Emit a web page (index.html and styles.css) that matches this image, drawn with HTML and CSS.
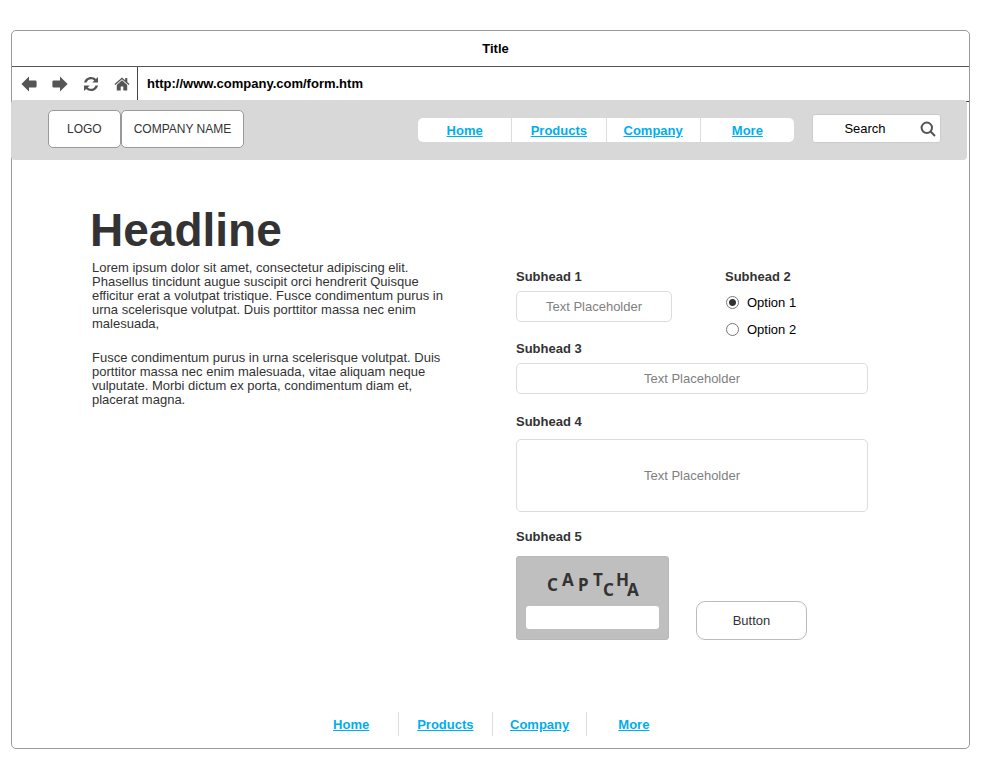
FILE: index.html
```html
<!DOCTYPE html>
<html lang="en">
<head>
<meta charset="utf-8">
<title>Title</title>
<link rel="stylesheet" href="styles.css">
</head>
<body>
<div class="window">
  <div class="title-bar">Title</div>
  <div class="address-bar">
    <div class="tools">
      <button class="tool" type="button" aria-label="Back"><svg viewBox="0 0 16 16"><path d="M.4 8 8 .6V4.600h6.400a1.200 1.200 0 0 1 1.200 1.200v4.400a1.200 1.200 0 0 1-1.200 1.200H8v4z"/></svg></button>
      <button class="tool" type="button" aria-label="Forward"><svg viewBox="0 0 16 16"><path d="M15.600 8 8 .6V4.600H1.600A1.200 1.200 0 0 0 .4 5.800v4.400A1.200 1.200 0 0 0 1.600 11.400H8v4z"/></svg></button>
      <button class="tool" type="button" aria-label="Reload"><svg viewBox="0 0 16 16"><path d="M1 6.600C1.800 3.200 4.600 1 8 1c1.900 0 3.600.7 4.900 1.900L15 1v5.600H9.300L11.300 4.600C10.400 3.700 9.300 3.200 8 3.200c-2 0-3.700 1.200-4.500 3.400zM15 9.400C14.200 12.800 11.400 15 8 15c-1.900 0-3.600-.7-4.900-1.900L1 15V9.400h5.700l-2 2c.9.9 2 1.400 3.300 1.400 2 0 3.700-1.200 4.500-3.400z"/></svg></button>
      <button class="tool" type="button" aria-label="Home page"><svg viewBox="0 0 16 16"><path d="M8 1.400.5 8l.9 1L8 3.200 14.600 9l.9-1-2.200-2V2h-2.100v2.200z"/><path d="M8 4.300 2.800 8.900V14.500h3.900v-4h2.600v4h3.900V8.900z"/></svg></button>
    </div>
    <div class="address">http://www.company.com/form.htm</div>
  </div>

  <header class="site-header">
    <div class="brand">
      <div class="brand-box logo">LOGO</div>
      <div class="brand-box name">COMPANY NAME</div>
    </div>
    <nav class="menu menu-top" aria-label="Main">
      <a href="#home">Home</a>
      <a href="#products">Products</a>
      <a href="#company">Company</a>
      <a href="#more">More</a>
    </nav>
    <form class="search">
      <input type="search" aria-label="Search" placeholder="Search">
      <button class="search-button" type="button" aria-label="Run search"><svg viewBox="0 0 16 16"><circle cx="6.800" cy="6.800" r="5.200"/><path d="m10.800 10.800 4.200 4.200"/></svg></button>
    </form>
  </header>

  <main class="content">
    <article class="story">
      <h1>Headline</h1>
      <p>Lorem ipsum dolor sit amet, consectetur adipiscing elit. Phasellus tincidunt augue suscipit orci hendrerit Quisque efficitur erat a volutpat tristique. Fusce condimentum purus in urna scelerisque volutpat. Duis porttitor massa nec enim malesuada,</p>
      <p>Fusce condimentum purus in urna scelerisque volutpat. Duis porttitor massa nec enim malesuada, vitae aliquam neque vulputate. Morbi dictum ex porta, condimentum diam et, placerat magna.</p>
    </article>

    <form class="form">
      <div class="row">
        <div class="field">
          <label class="subhead" for="field-1">Subhead 1</label>
          <input class="box" id="field-1" type="text" placeholder="Text Placeholder">
        </div>
        <fieldset class="options">
          <legend class="subhead">Subhead 2</legend>
          <label class="option"><input type="radio" name="option" checked>Option 1</label>
          <label class="option"><input type="radio" name="option">Option 2</label>
        </fieldset>
      </div>
      <div class="field">
        <label class="subhead" for="field-3">Subhead 3</label>
        <input class="box" id="field-3" type="text" placeholder="Text Placeholder">
      </div>
      <div class="field">
        <label class="subhead" for="field-4">Subhead 4</label>
        <textarea class="box area" id="field-4" placeholder="Text Placeholder"></textarea>
      </div>
      <div class="field">
        <label class="subhead" for="field-5">Subhead 5</label>
        <div class="submit-row">
          <div class="captcha">
            <svg class="captcha-art" viewBox="0 0 112 32" role="img" aria-label="Captcha"><text x="10 25 41 56 66 79 90" y="23 18 23 18 28 18 28">CAPTCHA</text></svg>
            <input id="field-5" type="text">
          </div>
          <button class="submit" type="button">Button</button>
        </div>
      </div>
    </form>
  </main>

  <footer class="site-footer">
    <nav class="menu" aria-label="Footer">
      <a href="#home">Home</a>
      <a href="#products">Products</a>
      <a href="#company">Company</a>
      <a href="#more">More</a>
    </nav>
  </footer>
</div>
</body>
</html>
```
FILE: styles.css
```css
* {
  box-sizing: border-box;
}

body {
  margin: 30px 30px 11px 11px;
  background: #fff;
  color: #333;
  font: 13px/15px "Liberation Sans", Arial, sans-serif;
}

input,
textarea,
button {
  font: inherit;
  color: inherit;
}

button {
  padding: 0;
  border: 0;
  background: none;
}

.window {
  border: 1px solid #999;
  border-radius: 5px;
}

.title-bar {
  padding: 10px 0 10px 10px;
  border-bottom: 1px solid #555;
  color: #000;
  font-weight: bold;
  text-align: center;
}

.address-bar {
  display: flex;
  height: 35px;
  border-bottom: 1px solid #333;
  color: #000;
  font-weight: bold;
}

.tools {
  display: flex;
  align-items: center;
  gap: 15px;
  padding: 0 7px 0 9px;
  border-right: 1px solid #444;
}

.tool {
  width: 16px;
  height: 16px;
}

.tool svg {
  display: block;
  fill: #555;
}

.address {
  padding: 9px;
}

.site-header {
  position: relative;
  display: flex;
  align-items: flex-start;
  margin: -2px 2px 0 -1px;
  padding: 10px 26px 12px 37px;
  border-radius: 4px;
  background: #d8d8d8;
}

.brand {
  display: flex;
  margin-right: auto;
}

.brand-box {
  padding: 11px 12px 10px;
  border: 1px solid #999;
  border-radius: 5px;
  background: #fff;
  font-size: 12px;
}

.logo {
  padding: 11px 18px 10px;
}

.menu {
  display: flex;
  width: 376px;
}

.menu a {
  flex: 1;
  padding: 5px 0 4px;
  border-left: 1px solid #ddd;
  color: #00aeef;
  font-weight: bold;
  text-align: center;
}

.menu a:first-child {
  border-left: 0;
}

.menu-top {
  margin: 8px 18px 0 0;
  border-radius: 5px;
  background: #fff;
}

.search {
  display: flex;
  align-items: center;
  width: 129px;
  height: 29px;
  margin-top: 4px;
  padding: 0 4px 0 10px;
  border: 1px solid #ccc;
  border-radius: 3px;
  background: #fff;
}

.search input {
  flex: 1;
  min-width: 0;
  padding: 0;
  border: 0;
  background: none;
  text-align: center;
}

.search input::placeholder {
  color: #000;
  opacity: 1;
}

.search-button {
  width: 16px;
  height: 16px;
}

.search-button svg {
  display: block;
  fill: none;
  stroke: #555;
  stroke-width: 2;
}

.content {
  display: grid;
  grid-template-columns: minmax(0, 352px) minmax(0, 352px);
  justify-content: space-between;
  padding: 46px 101px 0 80px;
}

.story h1 {
  margin: 0 0 7px -2px;
  font-size: 46px;
  line-height: 48px;
}

.story p {
  margin: 0 0 20px;
  line-height: 14px;
}

.form {
  padding-top: 63px;
}

.row {
  display: flex;
  justify-content: space-between;
  margin-bottom: 4px;
}

.field {
  display: flex;
  flex-direction: column;
  margin-bottom: 20px;
}

.row .field {
  width: 156px;
  margin: 0;
}

.subhead {
  padding: 0;
  margin-bottom: 7px;
  font-weight: bold;
}

.box {
  width: 100%;
  height: 31px;
  padding: 0 8px;
  border: 1px solid #ddd;
  border-radius: 5px;
  background: #fff;
  text-align: center;
}

.box::placeholder {
  color: #808080;
  opacity: 1;
}

.area {
  display: block;
  height: 73px;
  margin: 3px 0 -3px;
  padding: 28px 8px;
  resize: none;
}

.options {
  width: 143px;
  margin: 0;
  padding: 0;
  border: 0;
}

.option {
  display: flex;
  align-items: center;
  gap: 8px;
  margin: 4px 0 12px 1px;
  color: #000;
}

.option:last-child {
  margin-bottom: 0;
}

.option input {
  width: 13px;
  height: 13px;
  margin: 0;
  border: 1px solid #777;
  border-radius: 50%;
  appearance: none;
}

.option input:checked {
  background: radial-gradient(circle, #333 3px, #fff 4px);
}

.submit-row {
  display: flex;
  align-items: flex-end;
  gap: 27px;
  margin-top: 5px;
}

.captcha {
  width: 153px;
  padding: 11px 9px 10px;
  border: 1px solid #b8b8b8;
  border-radius: 3px;
  background: #bfbfbf;
}

.captcha-art {
  display: block;
  width: 112px;
  height: 32px;
  margin: 0 auto 6px;
  fill: #333;
  font: bold 17px "Noto Sans", "Open Sans", sans-serif;
}

.captcha input {
  display: block;
  width: 100%;
  height: 23px;
  padding: 0 4px;
  border: 0;
  border-radius: 3px;
  background: #fff;
}

.submit {
  width: 111px;
  height: 39px;
  border: 1px solid #bbb;
  border-radius: 9px;
  background: #fff;
}

.site-footer {
  display: flex;
  justify-content: center;
  padding: 52px 0 12px 4px;
}
```
